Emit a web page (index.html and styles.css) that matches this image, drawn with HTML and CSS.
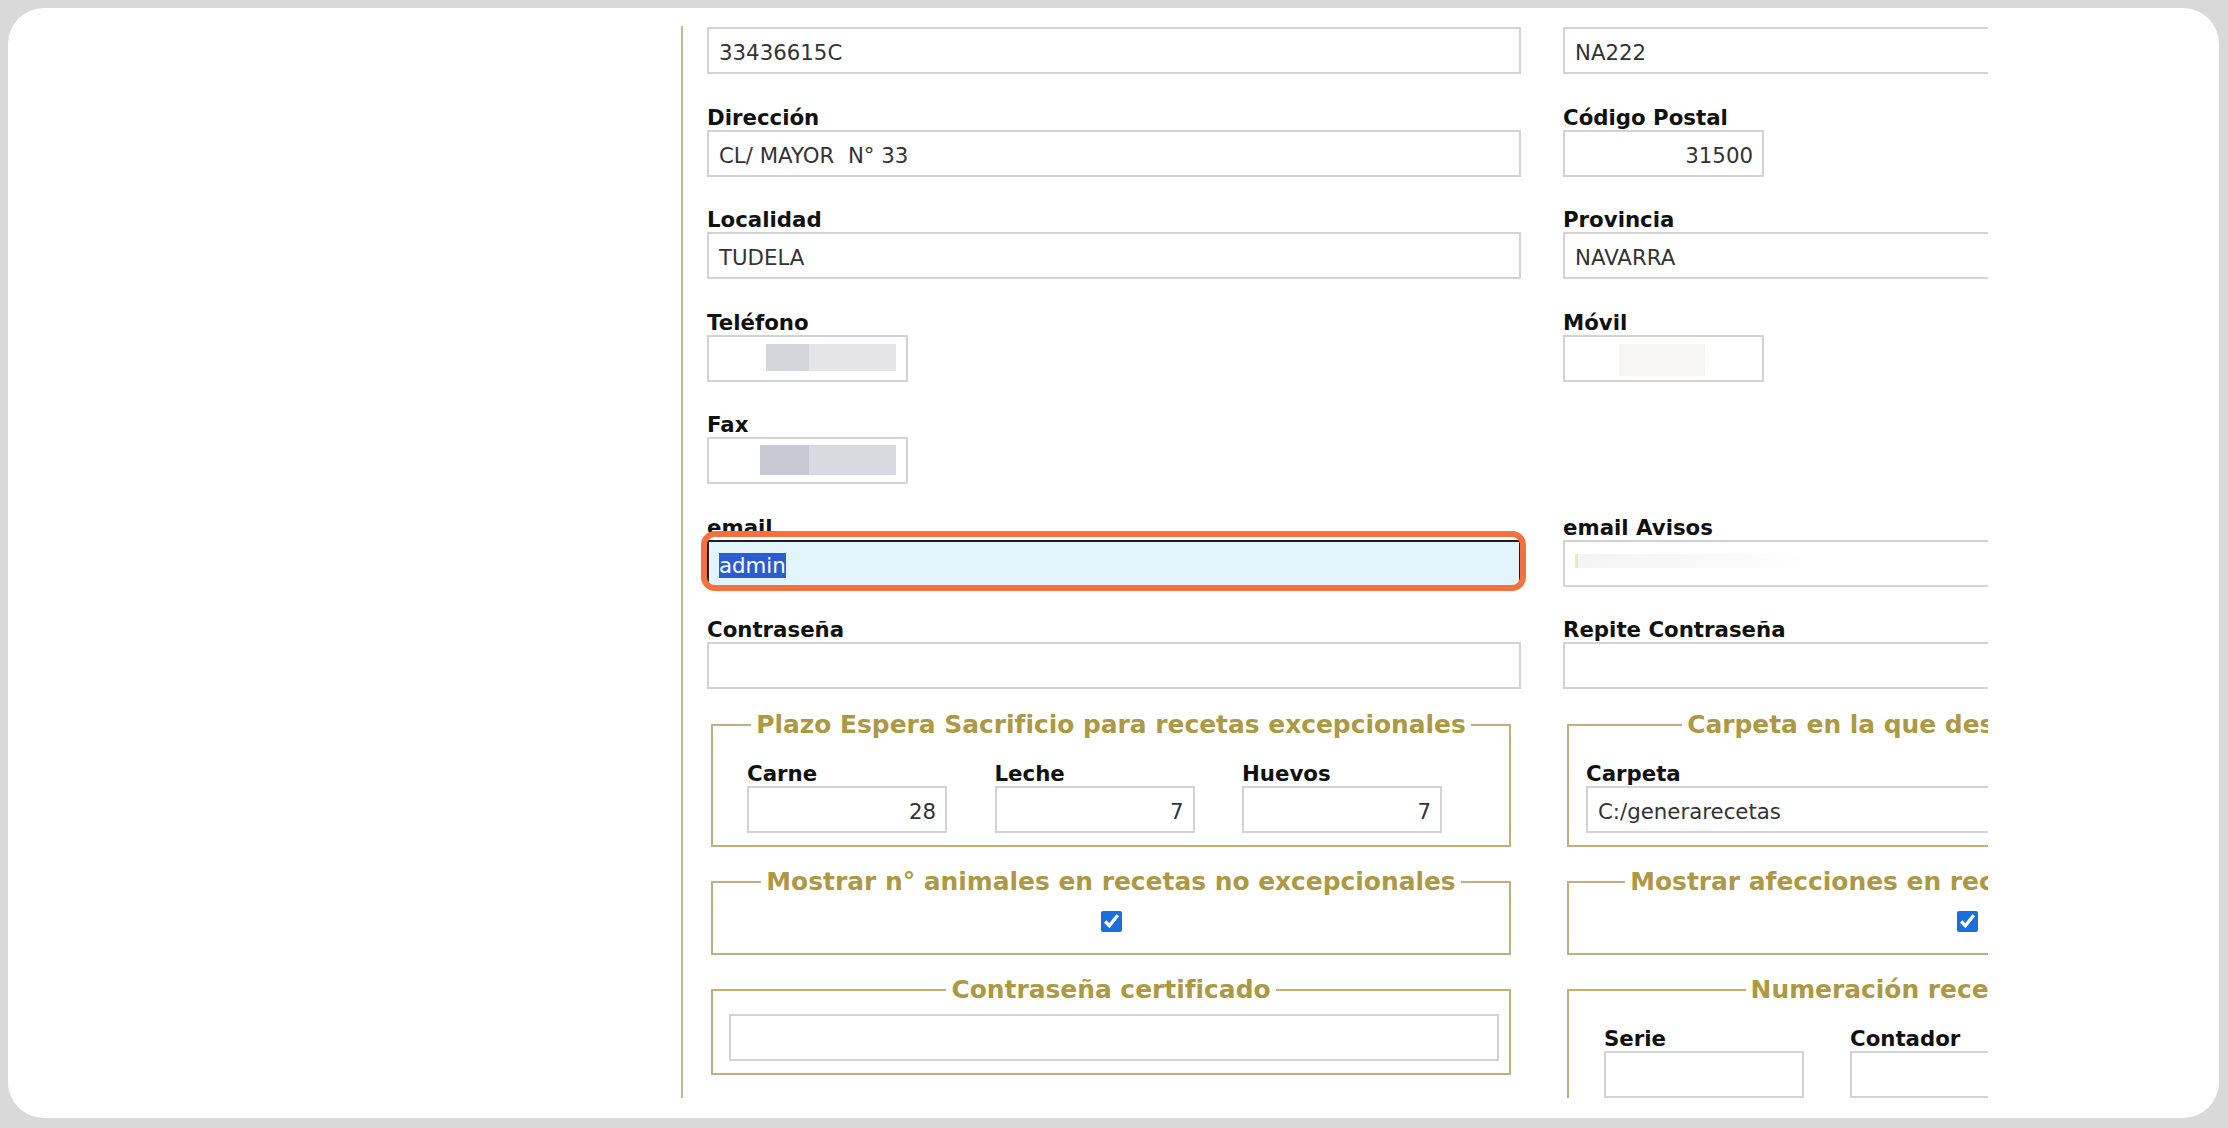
FILE: index.html
```html
<!DOCTYPE html>
<html lang="es">
<head>
<meta charset="utf-8">
<title>Datos del veterinario</title>
<link rel="stylesheet" href="styles.css">
</head>
<body>
<div class="frame">
  <div class="viewport">
    <div class="page">
      <div class="fields">
        <div class="field"><span class="lbl">NIF</span><div class="inp">33436615C</div></div>
        <div class="field"><span class="lbl">Nº Veterinario</span><div class="inp">NA222</div></div>

        <div class="field"><span class="lbl">Dirección</span><div class="inp">CL/ MAYOR&nbsp; N° 33</div></div>
        <div class="field"><span class="lbl">Código Postal</span><div class="inp short num">31500</div></div>

        <div class="field"><span class="lbl">Localidad</span><div class="inp">TUDELA</div></div>
        <div class="field"><span class="lbl">Provincia</span><div class="inp">NAVARRA</div></div>

        <div class="field"><span class="lbl">Teléfono</span><div class="inp short redact tel"><span class="blk b1"></span><span class="blk b2"></span></div></div>
        <div class="field"><span class="lbl">Móvil</span><div class="inp short redact movil"><span class="blk b3"></span></div></div>

        <div class="field"><span class="lbl">Fax</span><div class="inp short redact fax"><span class="blk b4"></span><span class="blk b5"></span></div></div>
        <div class="field"></div>

        <div class="field"><span class="lbl">email</span><div class="inp focus"><span class="sel">admin</span></div></div>
        <div class="field"><span class="lbl">email Avisos</span><div class="inp redact avisos"><span class="smudge"></span></div></div>

        <div class="field"><span class="lbl">Contraseña</span><div class="inp"></div></div>
        <div class="field"><span class="lbl">Repite Contraseña</span><div class="inp"></div></div>
      </div>

      <div class="groups">
        <fieldset class="grp">
          <legend>Plazo Espera Sacrificio para recetas excepcionales</legend>
          <div class="grp-body trio">
            <div class="field"><span class="lbl">Carne</span><div class="inp num">28</div></div>
            <div class="field"><span class="lbl">Leche</span><div class="inp num">7</div></div>
            <div class="field"><span class="lbl">Huevos</span><div class="inp num">7</div></div>
          </div>
        </fieldset>
        <fieldset class="grp">
          <legend>Carpeta en la que descargar las recetas</legend>
          <div class="grp-body folder">
            <div class="field"><span class="lbl">Carpeta</span><div class="inp">C:/generarecetas</div></div>
          </div>
        </fieldset>

        <fieldset class="grp">
          <legend>Mostrar n° animales en recetas no excepcionales</legend>
          <div class="grp-body check"><input type="checkbox" class="cb" checked></div>
        </fieldset>
        <fieldset class="grp">
          <legend>Mostrar afecciones en recetas no excepcionales</legend>
          <div class="grp-body check"><input type="checkbox" class="cb" checked></div>
        </fieldset>

        <fieldset class="grp">
          <legend>Contraseña certificado</legend>
          <div class="grp-body cert"><div class="inp"></div></div>
        </fieldset>
        <fieldset class="grp">
          <legend>Numeración recetas ordinarias</legend>
          <div class="grp-body numer">
            <div class="field"><span class="lbl">Serie</span><div class="inp"></div></div>
            <div class="field"><span class="lbl">Contador</span><div class="inp"></div></div>
          </div>
        </fieldset>
      </div>
    </div>
  </div>
</div>
</body>
</html>
```
FILE: styles.css
```css
html, body {
  margin: 0;
  padding: 0;
}
body {
  background: #d9d9d9;
  font-family: "DejaVu Sans", Verdana, sans-serif;
  height: 1128px;
  overflow: hidden;
  padding-top: 8px;
  box-sizing: border-box;
}
.frame {
  margin: 0 9px 0 8px;
  height: 1110px;
  background: #ffffff;
  border-radius: 36px;
  padding: 18px 0 0 673px;
  box-sizing: border-box;
}
.viewport {
  width: 1307px;
  height: 1072px;
  overflow: hidden;
  border-left: 2px solid #c7b78c;
  box-sizing: border-box;
}
.page {
  margin-top: -24px;
  padding-left: 24px;
}
.fields {
  display: grid;
  grid-template-columns: 814px 814px;
  column-gap: 42px;
  row-gap: 30.5px;
}
.field {
  min-width: 0;
}
.lbl {
  display: block;
  font-weight: bold;
  font-size: 21.3px;
  line-height: 25px;
  color: #111111;
  white-space: nowrap;
}
.inp {
  box-sizing: border-box;
  height: 47px;
  border: 2px solid #d3d3d3;
  padding: 5px 10px 0 10px;
  line-height: 38px;
  font-size: 21.3px;
  color: #333333;
  white-space: nowrap;
  overflow: hidden;
  background: #ffffff;
}
.inp.short {
  width: 201px;
}
.inp.num {
  text-align: right;
  padding-right: 9px;
}
.inp.redact {
  display: flex;
  align-items: flex-start;
  padding-top: 7px;
}
.inp.tel {
  padding-left: 57px;
}
.inp.fax {
  padding-left: 51px;
  padding-top: 6px;
}
.inp.movil {
  padding-left: 54px;
}
.inp.avisos {
  padding-left: 10px;
  padding-top: 12px;
}
.blk {
  display: block;
  height: 27px;
}
.b1 { width: 45px; background: #d5d5dc; }
.b2 { width: 92px; background: #e5e5e9; }
.b3 { width: 86px; height: 32px; background: #f8f6f3; }
.b4 { width: 51px; height: 30px; background: #c8c8d2; }
.b5 { width: 91px; height: 30px; background: #d9d9e1; }
.smudge {
  display: block;
  width: 230px;
  height: 14px;
  border-left: 3px solid #ece6c8;
  background: linear-gradient(to right, #f4f4f4, #fafafa 70%, #ffffff);
}
.inp.focus {
  position: relative;
  overflow: visible;
  background: #e2f5fc;
  border-color: #1d1d1d;
}
.inp.focus::after {
  content: "";
  position: absolute;
  top: -11px;
  left: -8px;
  right: -7px;
  bottom: -6px;
  border: 6px solid #f2713f;
  border-radius: 14px;
  pointer-events: none;
}
.sel {
  background: #2b5dcf;
  color: #ffffff;
}
.groups {
  margin-top: 21px;
  margin-left: 4px;
  display: grid;
  grid-template-columns: 800px 800px;
  column-gap: 56px;
  row-gap: 20px;
  align-items: start;
}
.grp {
  margin: 0;
  padding: 0;
  border: 2px solid #c0ae7c;
  min-width: 0;
  box-sizing: border-box;
  width: 800px;
}
.grp legend {
  margin: 0 auto;
  padding: 0 5px;
  font-size: 24.9px;
  line-height: 29px;
  font-weight: bold;
  color: #ad9844;
  white-space: nowrap;
}
.grp-body.trio {
  display: grid;
  grid-template-columns: 200px 200px 200px;
  column-gap: 47.5px;
  padding: 22px 10px 12px 34px;
}
.grp-body.folder {
  padding: 22px 10px 12px 17px;
}
.grp-body.check {
  padding: 15px 10px 21px 10px;
}
.cb {
  display: block;
  width: 21px;
  height: 21px;
  margin: 0 auto;
  accent-color: #1b6fd8;
}
.grp-body.cert {
  padding: 10px 10px 12px 16px;
}
.grp-body.numer {
  display: grid;
  grid-template-columns: 200px 200px 200px;
  column-gap: 46px;
  padding: 22px 10px 12px 35px;
}
```
